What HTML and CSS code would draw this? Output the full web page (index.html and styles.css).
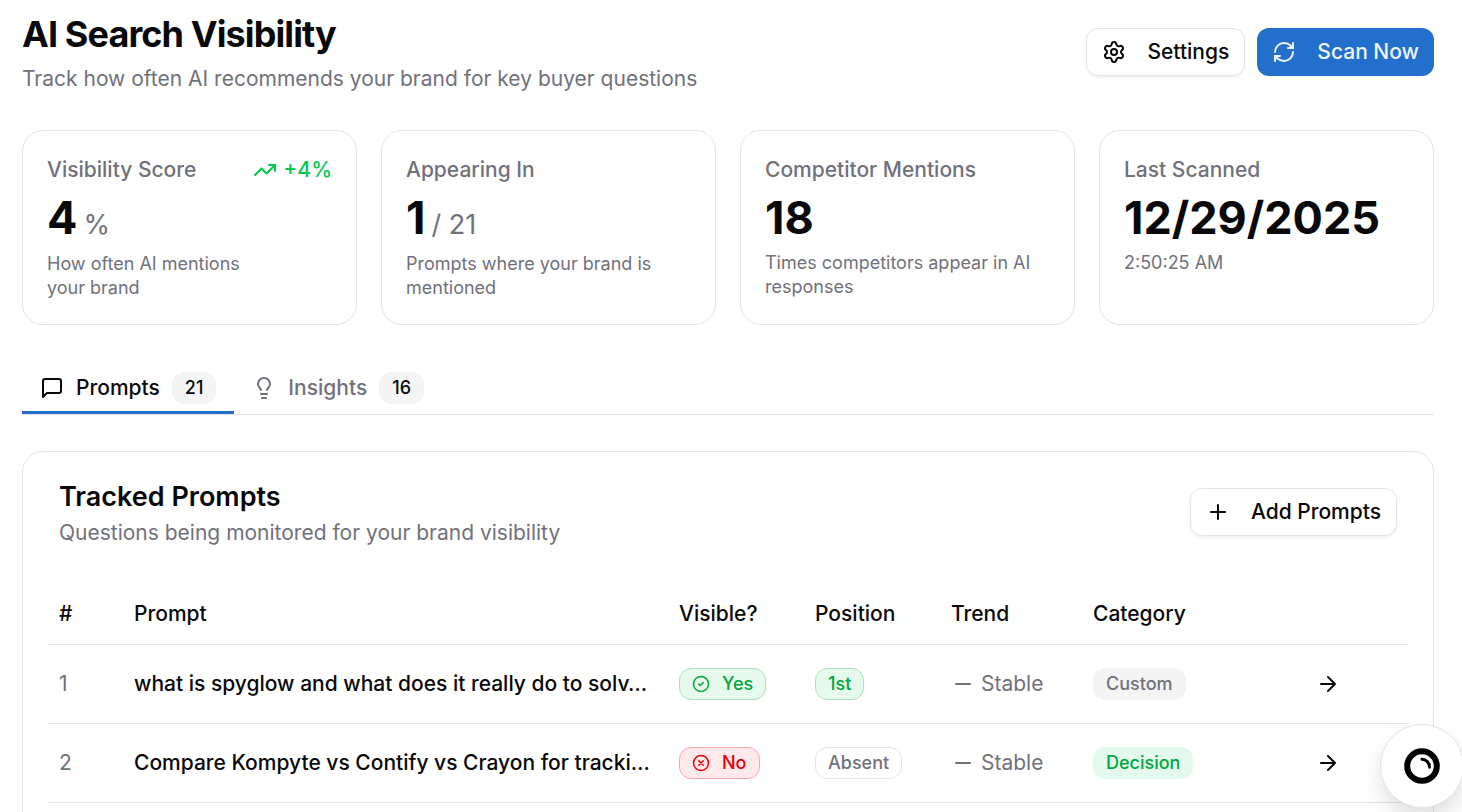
FILE: index.html
```html
<!DOCTYPE html>
<html lang="en">
<head>
<meta charset="utf-8">
<meta name="viewport" content="width=device-width, initial-scale=1">
<title>AI Search Visibility</title>
<link rel="stylesheet" href="styles.css">
</head>
<body>
<svg class="sprite" aria-hidden="true">
  <symbol id="arrow" viewBox="0 0 24 24"><path d="M5 12h14M12 5l7 7-7 7"/></symbol>
  <symbol id="minus" viewBox="0 0 24 24"><path d="M5 12h14"/></symbol>
</svg>
<main class="page">
  <header class="page-header">
    <div>
      <h1 class="page-title">AI Search Visibility</h1>
      <p class="page-subtitle">Track how often AI recommends your brand for key buyer questions</p>
    </div>
    <div class="actions">
      <button class="button" type="button">
        <svg class="icon" viewBox="0 0 24 24"><path d="M9.671 4.136a2.34 2.34 0 0 1 4.659 0 2.34 2.34 0 0 0 3.319 1.915 2.34 2.34 0 0 1 2.33 4.033 2.34 2.34 0 0 0 0 3.831 2.34 2.34 0 0 1-2.33 4.033 2.34 2.34 0 0 0-3.319 1.915 2.34 2.34 0 0 1-4.659 0 2.34 2.34 0 0 0-3.32-1.915 2.34 2.34 0 0 1-2.33-4.033 2.34 2.34 0 0 0 0-3.831A2.34 2.34 0 0 1 6.35 6.051a2.34 2.34 0 0 0 3.319-1.915"/><circle cx="12" cy="12" r="3"/></svg>
        Settings
      </button>
      <button class="button button-primary" type="button">
        <svg class="icon" viewBox="0 0 24 24"><path d="M3 12a9 9 0 0 1 9-9 9.75 9.75 0 0 1 6.74 2.74L21 8"/><path d="M21 3v5h-5"/><path d="M21 12a9 9 0 0 1-9 9 9.75 9.75 0 0 1-6.74-2.74L3 16"/><path d="M8 16H3v5"/></svg>
        Scan Now
      </button>
    </div>
  </header>

  <section class="stats" aria-label="Summary">
    <article class="stat">
      <div class="stat-main">
        <h2 class="stat-label">Visibility Score</h2>
        <p class="stat-value">4 <span class="stat-unit">%</span></p>
        <p class="stat-note">How often AI mentions your brand</p>
      </div>
      <p class="change"><svg class="icon" viewBox="0 0 24 24"><path d="M16 7h6v6"/><path d="m22 7-8.5 8.5-5-5L2 17"/></svg>+4%</p>
    </article>
    <article class="stat">
      <div class="stat-main">
        <h2 class="stat-label">Appearing In</h2>
        <p class="stat-value">1 <span class="stat-unit">/ 21</span></p>
        <p class="stat-note">Prompts where your brand is mentioned</p>
      </div>
    </article>
    <article class="stat">
      <div class="stat-main">
        <h2 class="stat-label">Competitor Mentions</h2>
        <p class="stat-value">18</p>
        <p class="stat-note">Times competitors appear in AI responses</p>
      </div>
    </article>
    <article class="stat">
      <div class="stat-main">
        <h2 class="stat-label">Last Scanned</h2>
        <p class="stat-value">12/29/2025</p>
        <p class="stat-note">2:50:25 AM</p>
      </div>
    </article>
  </section>

  <nav class="tabs" aria-label="Views">
    <button class="tab tab-active" type="button">
      <svg class="icon" viewBox="0 0 24 24"><path d="M21 15a2 2 0 0 1-2 2H7l-4 4V5a2 2 0 0 1 2-2h14a2 2 0 0 1 2 2z"/></svg>
      Prompts <span class="badge badge-count">21</span>
    </button>
    <button class="tab" type="button">
      <svg class="icon" viewBox="0 0 24 24"><path d="M15 14c.2-1 .7-1.7 1.5-2.5 1-.9 1.5-2.2 1.5-3.5A6 6 0 0 0 6 8c0 1 .2 2.2 1.5 3.5.7.7 1.3 1.5 1.5 2.5"/><path d="M9 18h6"/><path d="M10 22h4"/></svg>
      Insights <span class="badge badge-count">16</span>
    </button>
  </nav>

  <section class="panel">
    <header class="panel-header">
      <div>
        <h2 class="panel-title">Tracked Prompts</h2>
        <p class="panel-subtitle">Questions being monitored for your brand visibility</p>
      </div>
      <button class="button" type="button">
        <svg class="icon" viewBox="0 0 24 24"><path d="M5 12h14M12 5v14"/></svg>
        Add Prompts
      </button>
    </header>
    <table class="prompts">
      <colgroup>
        <col class="col-number"><col><col class="col-visible"><col class="col-position"><col class="col-trend"><col class="col-category"><col class="col-open">
      </colgroup>
      <thead>
        <tr><th>#</th><th>Prompt</th><th>Visible?</th><th>Position</th><th>Trend</th><th>Category</th><th></th></tr>
      </thead>
      <tbody>
        <tr>
          <td class="muted">1</td>
          <td class="prompt">what is spyglow and what does it really do to solv…</td>
          <td><span class="badge badge-green"><svg class="icon icon-small" viewBox="0 0 24 24"><circle cx="12" cy="12" r="10"/><path d="m9 12 2 2 4-4"/></svg>Yes</span></td>
          <td><span class="badge badge-green">1st</span></td>
          <td><span class="trend"><svg class="icon"><use href="#minus"/></svg>Stable</span></td>
          <td><span class="badge badge-custom">Custom</span></td>
          <td><button class="open" type="button" aria-label="Open prompt 1"><svg class="icon"><use href="#arrow"/></svg></button></td>
        </tr>
        <tr>
          <td class="muted">2</td>
          <td class="prompt">Compare Kompyte vs Contify vs Crayon for tracki…</td>
          <td><span class="badge badge-red"><svg class="icon icon-small" viewBox="0 0 24 24"><circle cx="12" cy="12" r="10"/><path d="m15 9-6 6M9 9l6 6"/></svg>No</span></td>
          <td><span class="badge badge-outline">Absent</span></td>
          <td><span class="trend"><svg class="icon"><use href="#minus"/></svg>Stable</span></td>
          <td><span class="badge badge-decision">Decision</span></td>
          <td><button class="open" type="button" aria-label="Open prompt 2"><svg class="icon"><use href="#arrow"/></svg></button></td>
        </tr>
      </tbody>
    </table>
  </section>
</main>
<button class="assistant" type="button" aria-label="Open assistant">
  <svg class="assistant-logo" viewBox="0 0 36 36"><circle cx="18" cy="18" r="14.8"/><path d="M18 11.2a7.6 7.6 0 0 1 7.4 8"/></svg>
</button>
</body>
</html>
```
FILE: styles.css
```css
* {
  box-sizing: border-box;
}

:root {
  --ink: #09090b;
  --muted: #71717b;
  --line: #e4e4e7;
  --soft: #f4f4f5;
  --primary: #2270cc;
  --green: #00a63e;
}

html {
  overflow: hidden;
}

body {
  margin: 0;
  background: #fff;
  color: var(--ink);
  font: 400 21px/30px Inter, "Liberation Sans", sans-serif;
}

h1, h2, p {
  margin: 0;
}

button {
  font: inherit;
  color: inherit;
  cursor: pointer;
}

.sprite {
  display: none;
}

.page {
  display: flex;
  flex-direction: column;
  gap: 36px;
  min-height: 100vh;
  padding: 10px 28px 0 22px;
}

.icon {
  flex: none;
  width: 24px;
  height: 24px;
  fill: none;
  stroke: currentColor;
  stroke-width: 2;
  stroke-linecap: round;
  stroke-linejoin: round;
}

.icon-small {
  width: 18px;
  height: 18px;
}

.page-header,
.panel-header {
  display: flex;
  align-items: center;
  justify-content: space-between;
}

.page-title {
  font-size: 36px;
  line-height: 48px;
  font-weight: 700;
  letter-spacing: -0.025em;
}

.page-subtitle {
  margin-top: 6px;
  color: var(--muted);
}

.actions {
  display: flex;
  gap: 12px;
}

.button {
  display: inline-flex;
  align-items: center;
  gap: 21px;
  height: 48px;
  padding: 0 15px;
  border: 1px solid var(--line);
  border-radius: 12px;
  background: #fff;
  font-weight: 500;
  white-space: nowrap;
  box-shadow: 0 2px 3px rgb(0 0 0 / 5%);
}

.button-primary {
  border: 0;
  background: var(--primary);
  color: #eff6ff;
  box-shadow: none;
}

.stats {
  display: grid;
  grid-template-columns: repeat(4, 1fr);
  gap: 24px;
}

.stat {
  display: flex;
  align-items: flex-start;
  justify-content: space-between;
  padding: 24px;
  border: 1px solid var(--line);
  border-radius: 21px;
}

.stat-label {
  font-size: 21px;
  line-height: 30px;
  font-weight: 500;
  color: var(--muted);
}

.stat-value {
  display: flex;
  align-items: baseline;
  gap: 6px;
  margin: 6px 0;
  font-size: 45px;
  line-height: 54px;
  font-weight: 700;
}

.stat-unit {
  font-size: 27px;
  line-height: 42px;
  font-weight: 400;
  color: var(--muted);
}

.stat-note {
  font-size: 18px;
  line-height: 24px;
  color: var(--muted);
}

.change {
  display: flex;
  align-items: center;
  gap: 6px;
  font-weight: 500;
  color: #00c950;
}

.tabs {
  display: flex;
  border-bottom: 1px solid var(--line);
}

.tab {
  display: flex;
  align-items: center;
  gap: 12px;
  padding: 11px 18px 7px;
  border: 0;
  border-bottom: 3px solid transparent;
  background: none;
  font-weight: 500;
  color: var(--muted);
}

.tab-active {
  border-color: var(--primary);
  color: var(--ink);
}

.badge {
  display: inline-flex;
  align-items: center;
  gap: 12px;
  height: 32px;
  padding: 0 12px;
  border: 1px solid transparent;
  border-radius: 12px;
  font-size: 18px;
  line-height: 24px;
  font-weight: 500;
  vertical-align: middle;
}

.badge-count {
  background: var(--soft);
  color: var(--ink);
}

.badge-green {
  border-color: #a5e4bd;
  background: #e6f9ed;
  color: var(--green);
}

.badge-red {
  border-color: #fda6aa;
  background: #ffe9ea;
  color: #e7000b;
}

.badge-outline {
  border-color: var(--line);
  color: var(--muted);
}

.badge-custom {
  background: var(--soft);
  color: var(--muted);
}

.badge-decision {
  background: #e3f9ee;
  color: var(--green);
}

.panel {
  flex: 1;
  border: 1px solid var(--line);
  border-bottom: 0;
  border-radius: 21px 21px 0 0;
  padding: 36px 24px 0;
}

.panel-header {
  align-items: flex-start;
  margin-bottom: 36px;
  padding: 0 12px;
}

.panel-title {
  margin-bottom: 12px;
  font-size: 27px;
  line-height: 18px;
  font-weight: 600;
}

.panel-subtitle {
  color: var(--muted);
}

.prompts {
  width: 100%;
  table-layout: fixed;
  border-collapse: separate;
  border-spacing: 0;
}

.col-number { width: 75px; }
.col-visible { width: 136px; }
.col-position { width: 136px; }
.col-trend { width: 142px; }
.col-category { width: 205px; }
.col-open { width: 123px; }

.prompts th,
.prompts td {
  height: 79px;
  padding: 0 12px;
  border-bottom: 1px solid var(--line);
  text-align: left;
  vertical-align: middle;
  white-space: nowrap;
}

.prompts th {
  height: 61px;
  font-weight: 500;
}

.prompts .prompt {
  overflow: hidden;
  font-weight: 500;
  text-overflow: ellipsis;
}

.muted {
  color: var(--muted);
}

.trend {
  display: flex;
  align-items: center;
  gap: 6px;
  color: var(--muted);
}

.open {
  display: flex;
  align-items: center;
  height: 48px;
  padding: 0 18px;
  border: 0;
  background: none;
}

.assistant {
  position: fixed;
  right: -2px;
  bottom: 4px;
  display: grid;
  place-items: center;
  width: 84px;
  height: 84px;
  padding: 0;
  border: 1px solid var(--line);
  border-radius: 50%;
  background: #fff;
  box-shadow: 0 12px 24px -4px rgb(0 0 0 / 14%), 0 6px 36px rgb(0 0 0 / 4%);
}

.assistant-logo {
  width: 36px;
  height: 36px;
  fill: none;
  stroke: #000;
  stroke-width: 6;
  stroke-linecap: round;
}

.assistant-logo path {
  stroke-width: 3;
}
```
